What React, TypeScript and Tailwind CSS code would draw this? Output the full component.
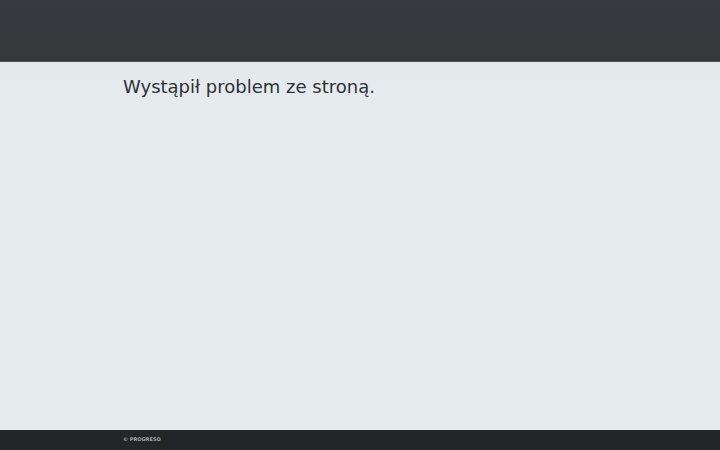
export default function App() {
  return (
    <div className="flex h-[450px] w-[720px] flex-col bg-[#e6ebee] font-['DejaVu_Sans',sans-serif]">
      {/* Header */}
      <header className="h-[62px] shrink-0 border-b border-[#4a4f54] bg-gradient-to-b from-[#373a3e] to-[#34383b]" />

      {/* Content */}
      <main className="flex-1 bg-gradient-to-b from-[#e4e9ec] to-[#e6ebee] to-[60px]">
        <div className="px-[123px] pt-[13px]">
          <h1 className="text-[18px] leading-[24px] font-normal text-[#2e3236]">
            Wystąpił problem ze stroną.
          </h1>
        </div>
      </main>

      {/* Footer */}
      <footer className="flex h-[20px] shrink-0 items-center bg-[#232527] px-[123px]">
        <span className="text-[5px] font-bold text-[#a4a8ab]">© PROGRESO</span>
      </footer>
    </div>
  );
}
